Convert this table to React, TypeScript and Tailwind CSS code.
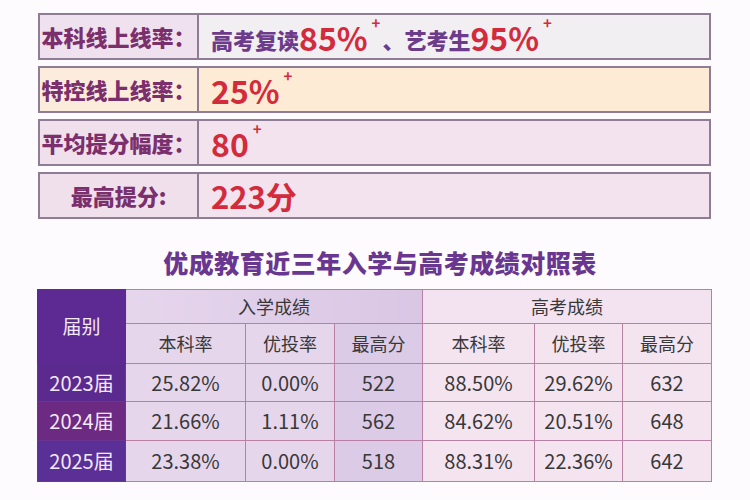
const cjk = { fontFamily: '"Noto Sans CJK SC", "Noto Sans", sans-serif' };

type Stat = { label: string; value: React.ReactNode; labelBg: string; valueBg: string };

function Big({ n, plus = true }: { n: string; plus?: boolean }) {
  return (
    <span className="inline-flex items-start">
      <span className="text-[32px] leading-none font-bold text-[#d42b3c]">{n}</span>
      {plus && <span className="text-[15px] leading-none font-bold text-[#d42b3c] -mt-[6px] ml-[4px]">+</span>}
    </span>
  );
}

const stats: Stat[] = [
  {
    label: '本科线上线率：',
    labelBg: 'bg-[#efe2ee]',
    valueBg: 'bg-[#f2eff3]',
    value: (
      <span className="flex items-end">
        <span className="text-[22px] font-black text-[#6d3b8c] leading-[28px]">高考复读</span>
        <Big n="85%" />
        <span className="text-[22px] font-black text-[#6d3b8c] leading-[28px] ml-[2px]">、艺考生</span>
        <Big n="95%" />
      </span>
    ),
  },
  { label: '特控线上线率：', labelBg: 'bg-[#fcecdc]', valueBg: 'bg-[#fdebd5]', value: <Big n="25%" /> },
  { label: '平均提分幅度：', labelBg: 'bg-[#efe0ec]', valueBg: 'bg-[#f2e3ee]', value: <Big n="80" /> },
  {
    label: '最高提分:',
    labelBg: 'bg-[#efe0ec]',
    valueBg: 'bg-[#f2e3ee]',
    value: <span className="text-[31px] leading-none font-bold text-[#d42b3c]">223分</span>,
  },
];

const rows = [
  { year: '2023届', bg: 'bg-[#5b2a8f]', d: ['25.82%', '0.00%', '522', '88.50%', '29.62%', '632'] },
  { year: '2024届', bg: 'bg-[#6d2a82]', d: ['21.66%', '1.11%', '562', '84.62%', '20.51%', '648'] },
  { year: '2025届', bg: 'bg-[#5a2f96]', d: ['23.38%', '0.00%', '518', '88.31%', '22.36%', '642'] },
];

const heights = ['h-[38px]', 'h-[39px]', 'h-[41px]'];

export default function App() {
  return (
    <div className="w-[750px] h-[500px] bg-[#fdfbfd] overflow-hidden" style={cjk}>
      <div className="pl-[38px] pt-[13px] w-[711px] flex flex-col gap-[6px]">
        {stats.map((s) => (
          <div key={s.label} className="flex h-[47px] border-2 border-[#8f7d95]">
            <div
              className={`w-[159px] shrink-0 border-r-2 border-[#8f7d95] flex items-center justify-center ${s.labelBg}`}
            >
              <span className="text-[22px] font-black text-[#7b2f6c]">{s.label}</span>
            </div>
            <div className={`flex-1 flex items-center pl-[12px] ${s.valueBg}`}>{s.value}</div>
          </div>
        ))}
      </div>

      <div className="mt-[28px] h-[30px] flex items-center justify-center">
        <span className="text-[25px] leading-[30px] font-black tracking-[0.5px] text-[#6a3790] pl-[10px]">
          优成教育近三年入学与高考成绩对照表
        </span>
      </div>

      <div className="pl-[37px] mt-[12px]">
        <table className="border-collapse table-fixed w-[674px] text-[#383838] border border-[#a98aa5]">
          <colgroup>
            <col className="w-[88px]" />
            <col className="w-[120px]" />
            <col className="w-[89px]" />
            <col className="w-[88px]" />
            <col className="w-[112px]" />
            <col className="w-[88px]" />
            <col className="w-[89px]" />
          </colgroup>
          <thead>
            <tr className="h-[34px]">
              <th
                rowSpan={2}
                className="bg-[#5c2a92] text-[#f4e9f7] text-[19px] font-normal border border-[#5c2a92]"
              >
                届别
              </th>
              <th
                colSpan={3}
                className="bg-gradient-to-r from-[#e6d6ec] to-[#d9c6e4] text-[18px] font-normal border border-[#b97fa5]"
              >
                入学成绩
              </th>
              <th colSpan={3} className="bg-[#f3e2ef] text-[18px] font-normal border border-[#b97fa5]">
                高考成绩
              </th>
            </tr>
            <tr className="h-[40px]">
              {['本科率', '优投率', '最高分'].map((h, i) => (
                <th
                  key={'a' + i}
                  className={`text-[18px] font-normal border border-[#b97fa5] ${
                    i === 2 ? 'bg-[#dccbe6]' : 'bg-[#e6d6ec]'
                  }`}
                >
                  {h}
                </th>
              ))}
              {['本科率', '优投率', '最高分'].map((h, i) => (
                <th key={'b' + i} className="text-[18px] font-normal border border-[#b97fa5] bg-[#f4e4f0]">
                  {h}
                </th>
              ))}
            </tr>
          </thead>
          <tbody>
            {rows.map((r, ri) => (
              <tr key={r.year} className={heights[ri]}>
                <td className={`${r.bg} text-[#f4e9f7] text-[20px] text-center border border-[#6a3590]`}>{r.year}</td>
                {r.d.map((v, i) => (
                  <td
                    key={i}
                    className={`text-[20px] text-center border border-[#b97fa5] ${
                      i < 3 ? (i === 2 ? 'bg-[#dccbe6]' : 'bg-[#e6d6ec]') : 'bg-[#f4e4f0]'
                    }`}
                  >
                    {v}
                  </td>
                ))}
              </tr>
            ))}
          </tbody>
        </table>
      </div>
    </div>
  );
}
